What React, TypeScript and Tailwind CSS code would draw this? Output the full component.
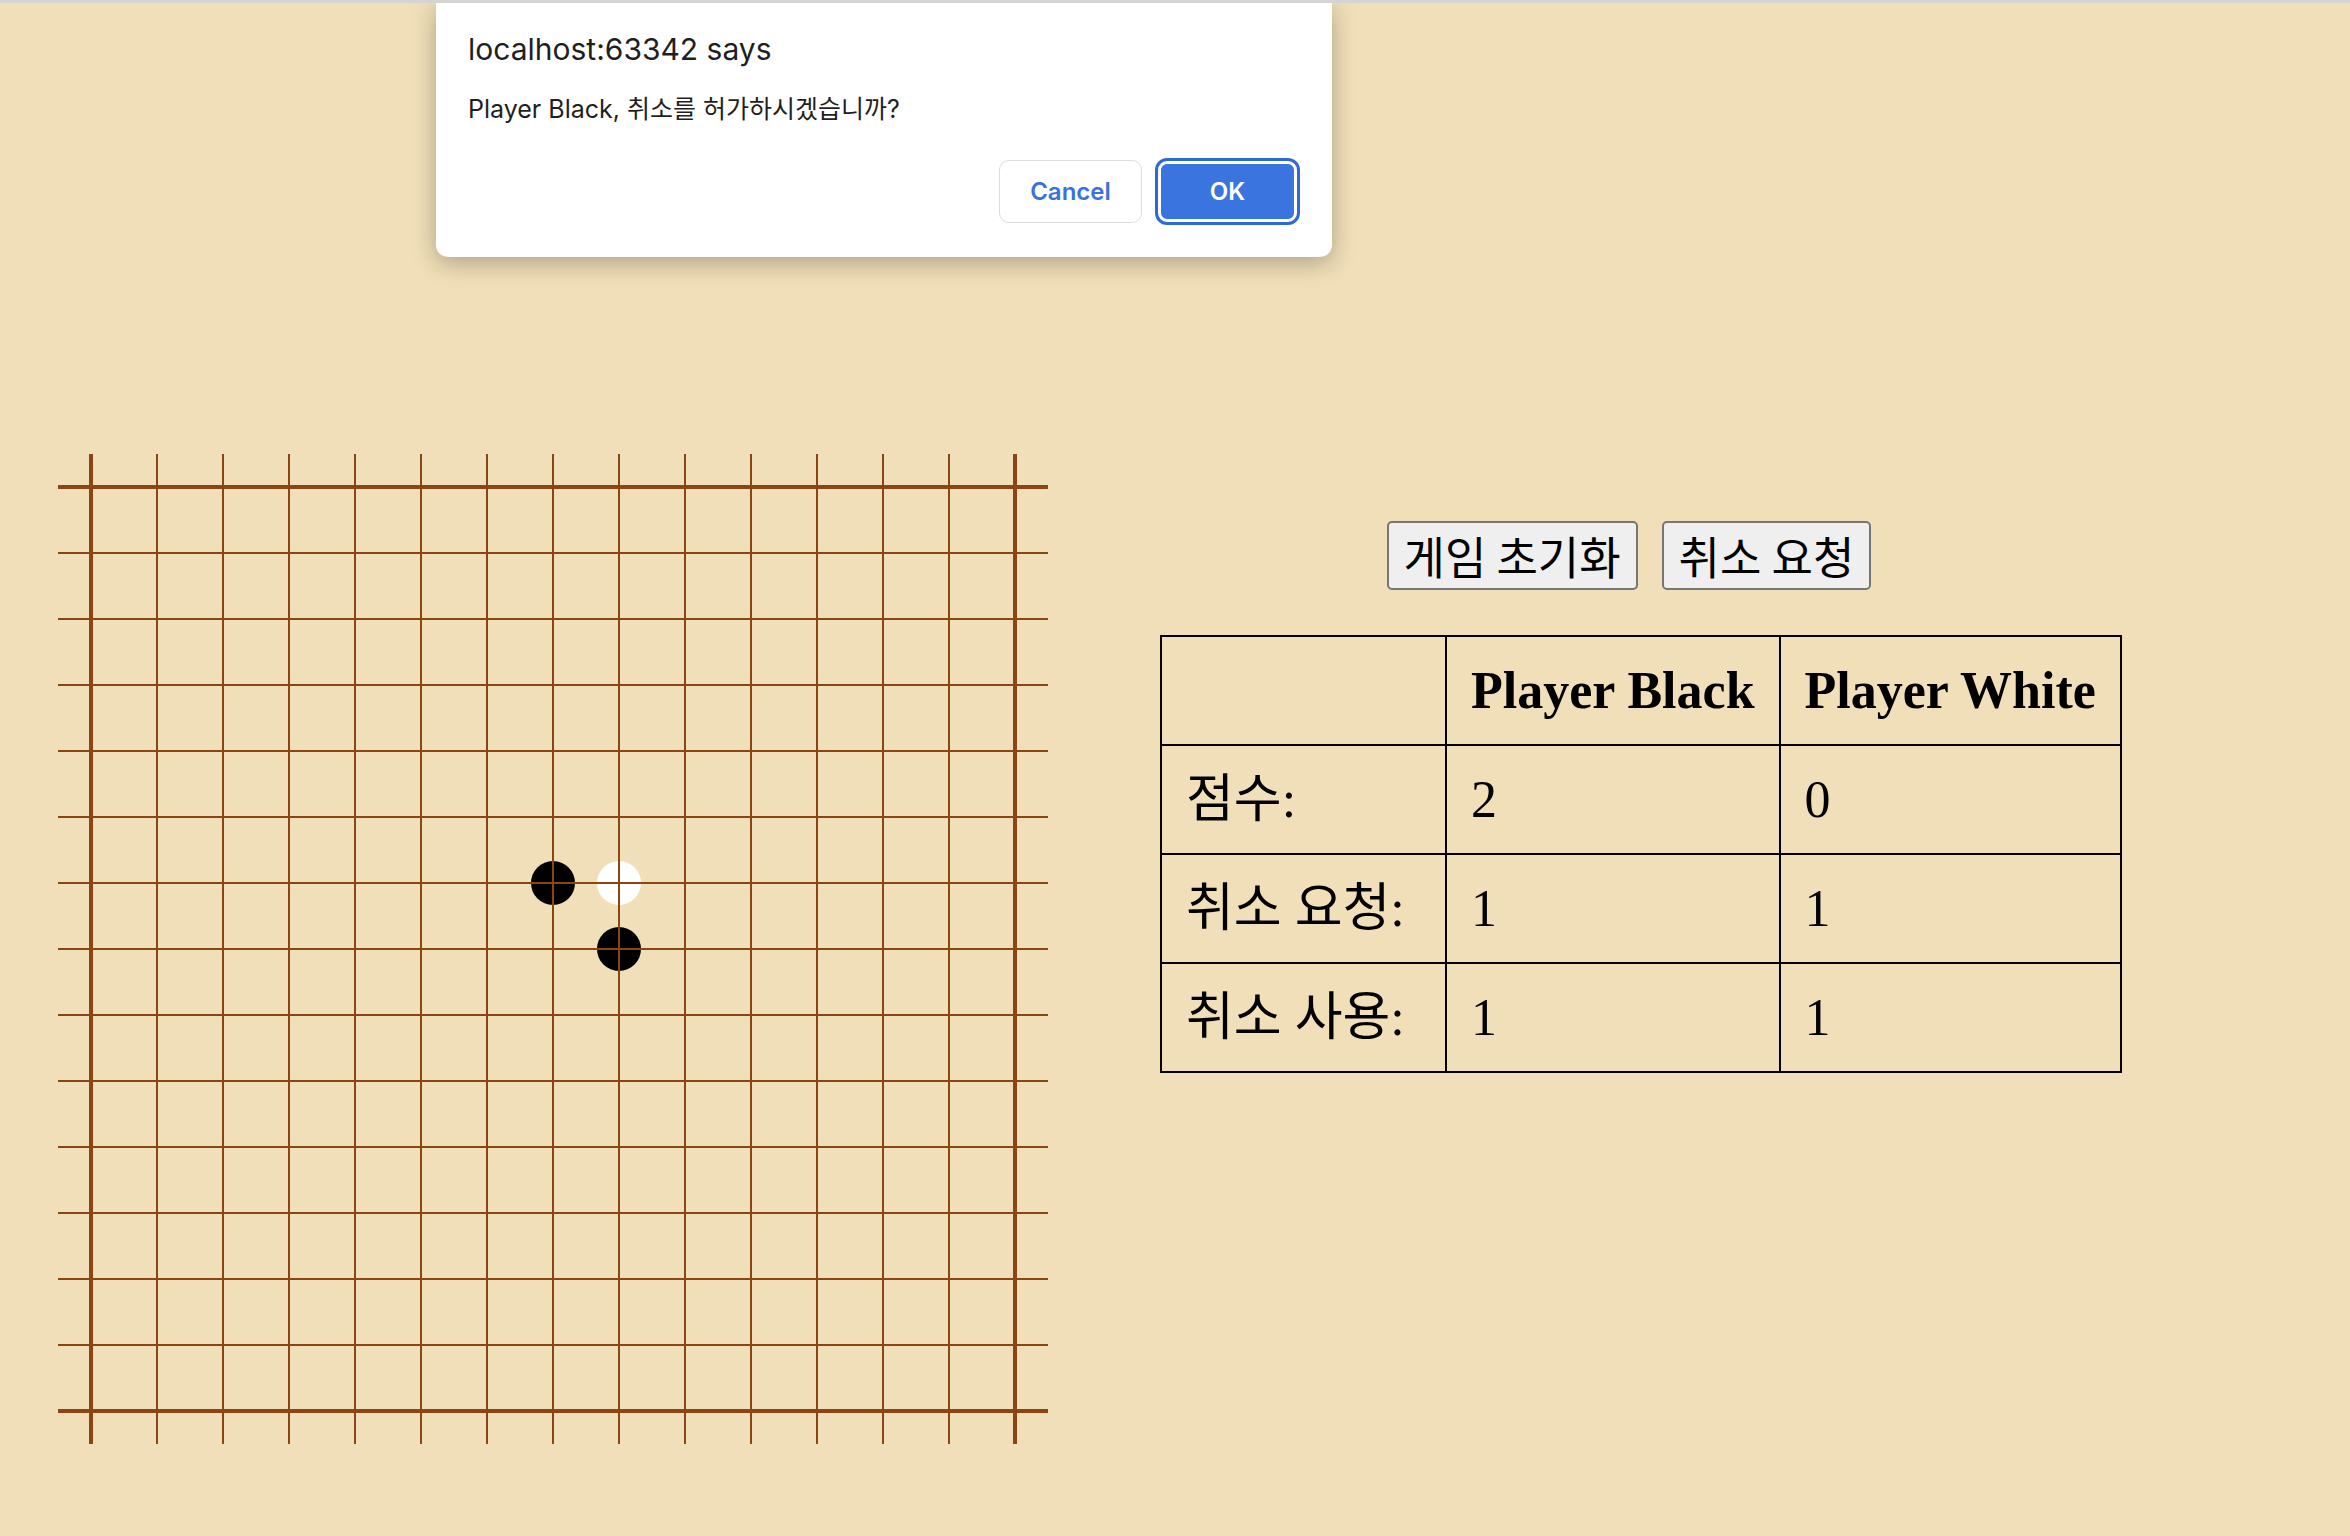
import React from 'react'

const SIZE = 15

const stones: Record<string, 'black' | 'white'> = {
  '6-7': 'black',
  '6-8': 'white',
  '7-8': 'black',
}

const rows = [
  { label: '점수:', black: 2, white: 0 },
  { label: '취소 요청:', black: 1, white: 1 },
  { label: '취소 사용:', black: 1, white: 1 },
]

function Cell({ r, c }: { r: number; c: number }) {
  const stone = stones[`${r}-${c}`]
  const edgeRow = r === 0 || r === SIZE - 1
  const edgeCol = c === 0 || c === SIZE - 1
  return (
    <div className="relative w-[66px] h-[66px]">
      {stone && (
        <div
          className={
            'absolute left-[11px] top-[11px] w-[44px] h-[44px] rounded-full ' +
            (stone === 'black' ? 'bg-black' : 'bg-white')
          }
        />
      )}
      <div
        className={
          'absolute left-0 right-0 bg-[#8b4513] ' +
          (edgeRow ? 'top-[31px] h-[4px]' : 'top-[32px] h-[2px]')
        }
      />
      <div
        className={
          'absolute top-0 bottom-0 bg-[#8b4513] ' +
          (edgeCol ? 'left-[31px] w-[4px]' : 'left-[32px] w-[2px]')
        }
      />
    </div>
  )
}

function Board() {
  const cells = []
  for (let r = 0; r < SIZE; r++) {
    for (let c = 0; c < SIZE; c++) {
      cells.push(<Cell key={`${r}-${c}`} r={r} c={c} />)
    }
  }
  return <div className="grid grid-cols-[repeat(15,66px)] w-[990px] h-[990px]">{cells}</div>
}

function ScoreTable() {
  const cell = 'border-2 border-black px-[24px] py-[24px] leading-[59px]'
  return (
    <table className="border-collapse border-2 border-black text-[52px] text-black font-['Liberation_Serif','Noto_Sans_CJK_KR',serif]">
      <thead>
        <tr>
          <th className={cell + ' w-[285px]'}></th>
          <th className={cell + ' font-bold'}>Player Black</th>
          <th className={cell + ' font-bold'}>Player White</th>
        </tr>
      </thead>
      <tbody>
        {rows.map((row) => (
          <tr key={row.label}>
            <td className={cell + ' text-left'}>{row.label}</td>
            <td className={cell + ' text-left'}>{row.black}</td>
            <td className={cell + ' text-left'}>{row.white}</td>
          </tr>
        ))}
      </tbody>
    </table>
  )
}

function ConfirmDialog() {
  return (
    <div className="absolute left-[436px] top-0 w-[896px] h-[254px] bg-white rounded-b-[12px] shadow-[0_6px_24px_rgba(0,0,0,0.28)] px-[32px] font-['Inter','Noto_Sans_CJK_KR',sans-serif] text-[#1f1f1f]">
      <div className="pt-[26px] text-[30px] leading-[40px]">localhost:63342 says</div>
      <div className="mt-[22px] text-[25px] leading-[36px]">Player Black, 취소를 허가하시겠습니까?</div>
      <div className="mt-[33px] flex justify-end items-center gap-[16px]">
        <button className="w-[143px] h-[63px] rounded-[10px] border-[1.5px] border-[#dadce0] bg-white text-[24px] font-semibold text-[#3a72dc]">
          Cancel
        </button>
        <button className="w-[139px] h-[61px] mr-[3px] rounded-[9px] border-[3px] border-white bg-[#3a74df] text-[24px] font-semibold text-white outline outline-[3px] outline-[#3168d6]">
          OK
        </button>
      </div>
    </div>
  )
}

export default function App() {
  return (
    <div className="relative min-h-screen w-full bg-[#f0dfb8] border-t-[3px] border-[#d4d4d4] overflow-hidden">
      <div className="flex items-start pl-[58px] pt-[451px]">
        <Board />
        <div className="ml-[112px] mt-[67px] flex flex-col items-center">
          <div className="flex justify-center mb-[45px] font-['Noto_Sans_CJK_KR',sans-serif] text-[45px] text-black">
            <button className="h-[69px] px-[15px] mr-[24px] bg-[#efefef] border-2 border-[#767676] rounded-[5px] leading-none">
              게임 초기화
            </button>
            <button className="h-[69px] px-[15px] mr-[24px] bg-[#efefef] border-2 border-[#767676] rounded-[5px] leading-none">
              취소 요청
            </button>
          </div>
          <ScoreTable />
        </div>
      </div>
      <ConfirmDialog />
    </div>
  )
}
